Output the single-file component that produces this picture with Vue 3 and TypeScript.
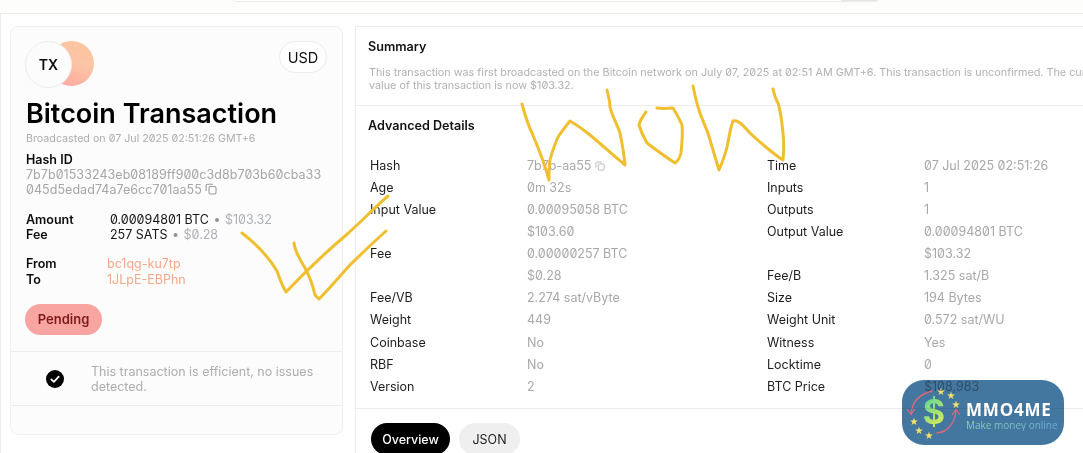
<script setup lang="ts">
interface Row { label: string; value: string; copy?: boolean }
const leftRows: Row[] = [
  { label: 'Hash', value: '7b7b-aa55', copy: true },
  { label: 'Age', value: '0m 32s' },
  { label: 'Input Value', value: '0.00095058 BTC' },
  { label: '', value: '$103.60' },
  { label: 'Fee', value: '0.00000257 BTC' },
  { label: '', value: '$0.28' },
  { label: 'Fee/VB', value: '2.274 sat/vByte' },
  { label: 'Weight', value: '449' },
  { label: 'Coinbase', value: 'No' },
  { label: 'RBF', value: 'No' },
  { label: 'Version', value: '2' },
]
const rightRows: Row[] = [
  { label: 'Time', value: '07 Jul 2025 02:51:26' },
  { label: 'Inputs', value: '1' },
  { label: 'Outputs', value: '1' },
  { label: 'Output Value', value: '0.00094801 BTC' },
  { label: '', value: '$103.32' },
  { label: 'Fee/B', value: '1.325 sat/B' },
  { label: 'Size', value: '194 Bytes' },
  { label: 'Weight Unit', value: '0.572 sat/WU' },
  { label: 'Witness', value: 'Yes' },
  { label: 'Locktime', value: '0' },
  { label: 'BTC Price', value: '$108,983' },
]
const scribbles: string[] = [
  'M242 233 C255 243 268 256 277 271 C280 280 283 287 286 292 C305 272 325 253 345 236 C360 223 375 207 388 196',
  'M294 243 C295 252 300 260 305 268 C310 277 313 286 315 295 L319 299 C328 290 339 277 350 265 C362 253 375 241 386 231',
  'M522 104 C525 115 528 125 532 133 C538 147 545 165 549 180 C549 172 549 166 550 160 C552 152 555 144 558 137 C562 131 566 126 570 121 C577 125 584 130 590 135 C602 145 614 156 625 165 C624 153 622 143 620 133 C617 124 612 116 610 107 C610 100 608 95 607 90',
  'M646 112 C643 116 640 120 639 125 C641 132 644 138 647 143 C656 150 666 157 675 163 C678 161 680 157 681 153 C682 143 683 134 682 125 C679 118 676 113 673 108 C668 108 662 109 657 108',
  'M693 86 C695 96 697 105 700 113 C703 122 708 131 710 140 C713 150 716 160 719 170 C722 163 725 155 727 147 C729 138 730 129 733 121 C739 119 745 128 750 133 C755 138 761 143 767 148 C772 152 778 157 783 160 C784 150 784 142 783 133 C782 123 781 112 778 103 C775 98 774 94 773 89',
]
const stars: [number, number][] = [
  [39, 11], [49, 15], [54, 24], [12, 41], [17, 50], [27, 55],
]
</script>

<template>
  <div class="page">
    <header class="topbar">
      <div class="search"><span class="search-end"></span></div>
    </header>

    <main class="main">
      <aside class="card">
        <div class="card-body">
          <div class="card-head">
            <div class="avatar">
              <span class="avatar-back"></span>
              <span class="avatar-front">TX</span>
            </div>
            <button class="currency">USD</button>
          </div>
          <div class="card-text">
            <h1 class="title">Bitcoin Transaction</h1>
            <p class="broadcast num">Broadcasted on 07 Jul 2025 02:51:26 GMT+6</p>

            <h2 class="hash-label">Hash ID</h2>
            <p class="hash num">
              7b7b01533243eb08189ff900c3d8b703b60cba33<br />045d5edad74a7e6cc701aa55
              <svg class="copy" viewBox="0 0 12 12" width="12" height="12" aria-hidden="true">
                <rect x="4" y="3.5" width="7" height="7.5" rx="1.5" />
                <path d="M8 1.2H2.600A1.500 1.500 0 0 0 1.100 2.700V8" />
              </svg>
            </p>

            <dl class="pairs amount">
              <dt>Amount</dt>
              <dd class="num">0.00094801 BTC <i>•</i> <span>$103.32</span></dd>
              <dt>Fee</dt>
              <dd class="num">257 SATS <i>•</i> <span>$0.28</span></dd>
            </dl>

            <dl class="pairs route">
              <dt>From</dt>
              <dd>bc1qg-ku7tp</dd>
              <dt>To</dt>
              <dd>1JLpE-EBPhn</dd>
            </dl>
          </div>

          <span class="pending">Pending</span>
        </div>

        <div class="notice">
          <svg class="check" viewBox="0 0 18 18" width="18" height="18" aria-hidden="true">
            <circle cx="9" cy="9" r="9" fill="#000" />
            <path d="M5.300 9.300 7.900 11.800 12.700 6.600" fill="none" stroke="#fff" stroke-width="1.700" stroke-linecap="round" stroke-linejoin="round" />
          </svg>
          <p>This transaction is efficient, no issues detected.</p>
        </div>
      </aside>

      <section class="panel">
        <div class="summary">
          <h2>Summary</h2>
          <p class="num">This transaction was first broadcasted on the Bitcoin network on July 07, 2025 at 02:51 AM GMT+6. This transaction is unconfirmed. The current value of this transaction is now $103.32.</p>
        </div>

        <div class="details">
          <h2>Advanced Details</h2>
          <div class="columns">
            <div v-for="(col, i) in [leftRows, rightRows]" :key="i" class="column">
              <div v-for="(row, j) in col" :key="j" class="row">
                <span class="row-label">{{ row.label }}</span>
                <span class="row-value num">
                  {{ row.value }}
                  <svg v-if="row.copy" class="copy small" viewBox="0 0 12 12" width="10" height="10" aria-hidden="true">
                    <rect x="4" y="3.5" width="7" height="7.5" rx="1.5" />
                    <path d="M8 1.200H2.600A1.500 1.500 0 0 0 1.100 2.700V8" />
                  </svg>
                </span>
              </div>
            </div>
          </div>
        </div>

        <nav class="tabs">
          <button class="tab active">Overview</button>
          <button class="tab">JSON</button>
        </nav>
      </section>
    </main>

    <svg class="ink" viewBox="0 0 1083 453" width="1083" height="453" aria-hidden="true">
      <path v-for="(d, i) in scribbles" :key="i" :d="d" />
    </svg>

    <div class="brand">
      <svg class="brand-mark" viewBox="0 0 64 65" width="64" height="65" aria-hidden="true">
        <defs>
          <linearGradient id="dollar" x1="0" y1="0" x2="0.5" y2="1">
            <stop offset="0" stop-color="#3fd6a4" />
            <stop offset="1" stop-color="#dfe85a" />
          </linearGradient>
        </defs>
        <path d="M30 11 C18 14 10 22 9 34" class="arc" />
        <path d="M5.500 29.500 L9 34.500 L12.500 29.500" class="arc" />
        <path d="M35 53 C46 52 53 43 54 30" class="arc" />
        <path d="M50.500 34.500 L54 29.500 L57.500 34.500" class="arc" />
        <text x="32" y="44" class="dollar" fill="url(#dollar)">$</text>
        <text v-for="(s, i) in stars" :key="i" :x="s[0]" :y="s[1] + 4" class="star">★</text>
      </svg>
      <div class="brand-text">
        <strong>MMO4ME</strong>
        <small>Make money online</small>
      </div>
    </div>
  </div>
</template>

<style>
html, body { margin: 0; background: #fff; }
</style>

<style scoped>
* { box-sizing: border-box; }
.page {
  position: relative;
  width: 1083px;
  height: 453px;
  overflow: hidden;
  background: #fff;
  color: #0b0b0c;
  font-family: Inter, "Liberation Sans", sans-serif;
}
.num { font-feature-settings: "zero" 1; }
.topbar {
  height: 14px;
  background: #fdfdfb;
  border-bottom: 1px solid #ececec;
  padding-left: 233px;
}
.search {
  width: 645px;
  height: 2px;
  background: #fff;
  border: 1px solid #ececec;
  border-top: 0;
  border-radius: 0 0 8px 8px;
  display: flex;
  justify-content: flex-end;
}
.search-end { width: 36px; height: 1px; background: #e6e6e6; }
.main {
  display: flex;
  align-items: flex-start;
  gap: 12px;
  height: 439px;
  padding: 12px 0 0 10px;
  border-left: 1px solid #ececec;
}
.card {
  flex: none;
  width: 333px;
  margin-left: -1px;
  height: 409px;
  background: #fcfcfc;
  border: 1px solid #f0f0f0;
  border-radius: 8px;
}
.card-body {
  height: 325px;
  padding: 14px 15px 0 14px;
  border-bottom: 1px solid #ececec;
}
.card-head { display: flex; justify-content: space-between; }
.card-text { padding-left: 1px; }
.avatar { position: relative; width: 69px; height: 47px; }
.avatar-back {
  position: absolute;
  left: 24px;
  top: 0;
  width: 45px;
  height: 45px;
  border-radius: 50%;
  background: linear-gradient(200deg, #fdc49d 0%, #fcc5a5 45%, #fba6a0 100%);
}
.avatar-front {
  position: absolute;
  left: 0;
  top: 0;
  width: 47px;
  height: 47px;
  border-radius: 50%;
  background: #fcfcfc;
  border: 1px solid #ececec;
  display: flex;
  align-items: center;
  justify-content: center;
  font-size: 14px;
  font-weight: 600;
}
.currency {
  width: 48px;
  height: 32px;
  padding: 0;
  background: #fff;
  border: 1px solid #ececec;
  border-radius: 16px;
  font: 400 14.500px Inter, sans-serif;
  color: #111;
}
.title {
  margin: 9px 0 0;
  font-size: 27px;
  line-height: 33px;
  font-weight: 600;
  color: #000;
}
.broadcast {
  margin: 2px 0 0;
  font-size: 10.700px;
  line-height: 14px;
  color: #adadad;
}
.hash-label {
  margin: 6px 0 0;
  font-size: 12.500px;
  line-height: 15px;
  font-weight: 600;
  color: #0b0b0c;
}
.hash {
  margin: 0;
  font-size: 12.500px;
  line-height: 15px;
  color: #a6a6a6;
  letter-spacing: 0.05px;
}
.copy { fill: none; stroke: #9a9a9a; stroke-width: 1.100; vertical-align: -1px; }
.copy.small { stroke: #b5b5b5; }
.pairs {
  display: grid;
  margin: 0;
  font-size: 12.500px;
  line-height: 15px;
}
.pairs dt { font-weight: 600; color: #0b0b0c; }
.pairs dd { margin: 0; }
.amount { margin-top: 15px; grid-template-columns: 84px 1fr; }
.amount dd { color: #161616; }
.amount i { font-style: normal; color: #8f9499; margin: 0 1px; }
.amount span { color: #adb1b5; }
.route { margin-top: 14px; grid-template-columns: 81px 1fr; line-height: 16px; }
.route dd { color: #f4a988; }
.pending {
  display: inline-block;
  margin-top: 16px;
  width: 77px;
  height: 31px;
  border-radius: 16px;
  background: #f8a5a1;
  color: #7e1a1a;
  font-size: 13px;
  font-weight: 600;
  line-height: 31px;
  text-align: center;
}
.notice {
  display: flex;
  align-items: center;
  height: 54px;
  border-bottom: 1px solid #ececec;
  padding-left: 35px;
}
.check { flex: none; }
.notice p {
  margin: 0 0 0 27px;
  width: 232px;
  font-size: 12.500px;
  line-height: 15px;
  color: #adadb1;
}
.panel {
  flex: none;
  width: 800px;
  height: 427px;
  background: #fff;
  border-top: 1px solid #ececec;
  border-left: 1px solid #ececec;
}
.summary {
  height: 79px;
  padding: 12px 12px 0 12px;
  border-bottom: 1px solid #ececec;
}
.summary h2, .details h2 {
  margin: 0;
  font-size: 12.600px;
  line-height: 16px;
  font-weight: 600;
  color: #111;
}
.summary p {
  margin: 11px 0 0 1px;
  width: 750px;
  font-size: 10.800px;
  line-height: 13px;
  color: #b1b1b1;
}
.details {
  height: 303px;
  padding: 12px 14px 0 12px;
  border-bottom: 1px solid #ececec;
}
.columns {
  display: grid;
  grid-template-columns: 397px 397px;
  margin-top: 20px;
  padding-left: 2px;
}
.row {
  display: grid;
  grid-template-columns: 157px 1fr;
  height: 22.130px;
  align-items: center;
  font-size: 12.500px;
}
.row-label { color: #1d1d1f; }
.row-value { color: #a8a8a8; }
.tabs {
  display: flex;
  gap: 9px;
  padding: 14px 0 0 15px;
}
.tab {
  height: 32px;
  padding: 0;
  border: 0;
  border-radius: 16px;
  font: 400 12.500px Inter, sans-serif;
  background: #efefef;
  color: #1c1c1c;
  width: 61px;
}
.tab.active { width: 79px; background: #000; color: #fff; font-weight: 500; }
.ink {
  position: absolute;
  left: 0;
  top: 0;
  pointer-events: none;
}
.ink path {
  fill: none;
  stroke: #f0bf30;
  stroke-width: 3;
  stroke-linecap: round;
  stroke-linejoin: round;
}
.brand {
  position: absolute;
  left: 902px;
  top: 380px;
  width: 162px;
  height: 65px;
  display: flex;
  align-items: center;
  border-radius: 22px;
  background: #44779f;
  mix-blend-mode: multiply;
}
.brand-mark { flex: none; }
.arc { fill: none; stroke: #e0667e; stroke-width: 1.300; stroke-linecap: round; stroke-linejoin: round; }
.dollar { font: 700 34px Inter, sans-serif; text-anchor: middle; }
.star { font-size: 10px; fill: #f6e36b; font-family: "DejaVu Sans", sans-serif; text-anchor: middle; }
.brand-text {
  display: flex;
  flex-direction: column;
  margin-top: 6px;
  white-space: nowrap;
}
.brand-text strong {
  font-family: "Open Sans", sans-serif;
  font-size: 17px;
  line-height: 19px;
  font-weight: 700;
  color: #fff;
  letter-spacing: 0.8px;
}
.brand-text small {
  font-family: "Open Sans", sans-serif;
  font-size: 10px;
  line-height: 12px;
  background: linear-gradient(90deg, #8fd8b0, #6aaedc);
  -webkit-background-clip: text;
  background-clip: text;
  color: transparent;
}
</style>
